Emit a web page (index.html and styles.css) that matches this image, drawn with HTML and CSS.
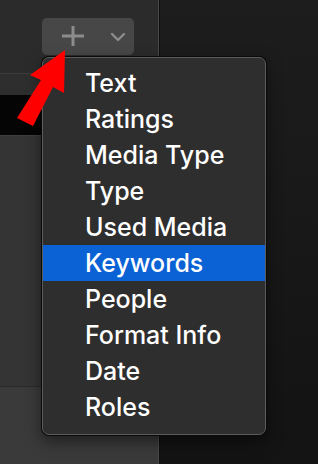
FILE: index.html
```html
<!DOCTYPE html>
<html lang="en">
<head>
  <meta charset="UTF-8" />
  <title>Add Filter Menu</title>
  <link rel="stylesheet" href="styles.css">
</head>
<body>
  <div class="window">
    <div class="sidebar">
      <div class="toolbar">
        <div class="add-btn">
          <svg class="plus" width="24" height="24" viewBox="0 0 24 24">
            <path d="M12 2v20M1 12h22" stroke="#8c8c8c" stroke-width="3" fill="none"/>
          </svg>
          <svg class="chevron" width="16" height="10" viewBox="0 0 16 10">
            <path d="M2 2l6 6 6-6" stroke="#8c8c8c" stroke-width="2.4" fill="none" stroke-linecap="round" stroke-linejoin="round"/>
          </svg>
        </div>
      </div>
      <div class="band"></div>
      <div class="black-row"></div>
      <div class="list-area"></div>
      <div class="footer-area"></div>
    </div>
    <div class="viewer"></div>
  </div>

  <div class="menu">
    <div class="item">Text</div>
    <div class="item">Ratings</div>
    <div class="item">Media Type</div>
    <div class="item">Type</div>
    <div class="item">Used Media</div>
    <div class="item active">Keywords</div>
    <div class="item">People</div>
    <div class="item">Format Info</div>
    <div class="item">Date</div>
    <div class="item">Roles</div>
  </div>

  <svg class="arrow" width="70" height="90" viewBox="0 0 70 90">
    <polygon points="65,50 64,93 53,87 33,126 17,118 41,80 30,75" transform="translate(0,-40)" fill="#ff0000"/>
  </svg>
</body>
</html>
```

FILE: styles.css
```css
body {
  margin: 0;
  padding: 0;
  width: 318px;
  height: 464px;
  overflow: hidden;
  position: relative;
  font-family: Inter, 'Helvetica Neue', sans-serif;
  background: #1a1a1a;
}
.window {
  display: flex;
  height: 464px;
}
.sidebar {
  width: 158px;
  display: flex;
  flex-direction: column;
  background: #2b2b2b;
  border-right: 1px solid #4a4a4a;
}
.toolbar {
  height: 74px;
  border-bottom: 1px solid #3c3c3c;
  padding: 18px 0 0 42px;
  box-sizing: border-box;
}
.add-btn {
  width: 92px;
  height: 37px;
  border-radius: 5px;
  background: #474747;
  display: flex;
  align-items: center;
  box-sizing: border-box;
  padding-left: 19px;
}
.plus {
  margin-top: -1px;
}
.chevron {
  margin-left: 25px;
  margin-top: 1px;
}
.band {
  height: 21px;
  background: #2e2e2e;
}
.black-row {
  height: 40px;
  background: #050505;
  border-bottom: 1px solid #3e3e3e;
}
.list-area {
  height: 250px;
  background: #343434;
  border-bottom: 1px solid #2a2a2a;
}
.footer-area {
  flex: 1;
  background: #3a3a3a;
}
.viewer {
  flex: 1;
  border-left: 1px solid #0e0e0e;
  background: linear-gradient(180deg, #1d1d1d, #131313);
}
.menu {
  position: absolute;
  left: 42px;
  top: 57px;
  width: 224px;
  height: 378px;
  box-sizing: border-box;
  padding-top: 7px;
  border: 1px solid #5c5c5c;
  border-radius: 7px;
  background: #2e2e2e;
  box-shadow: 0 0 0 1px #0a0a0a, 0 6px 16px rgba(0, 0, 0, 0.5);
  overflow: hidden;
}
.item {
  height: 36px;
  line-height: 36px;
  padding-left: 42px;
  font-size: 25px;
  font-weight: 500;
  color: #fff;
  white-space: nowrap;
}
.item.active {
  background: #0a62d5;
}
.arrow {
  position: absolute;
  left: 0;
  top: 40px;
}
```
